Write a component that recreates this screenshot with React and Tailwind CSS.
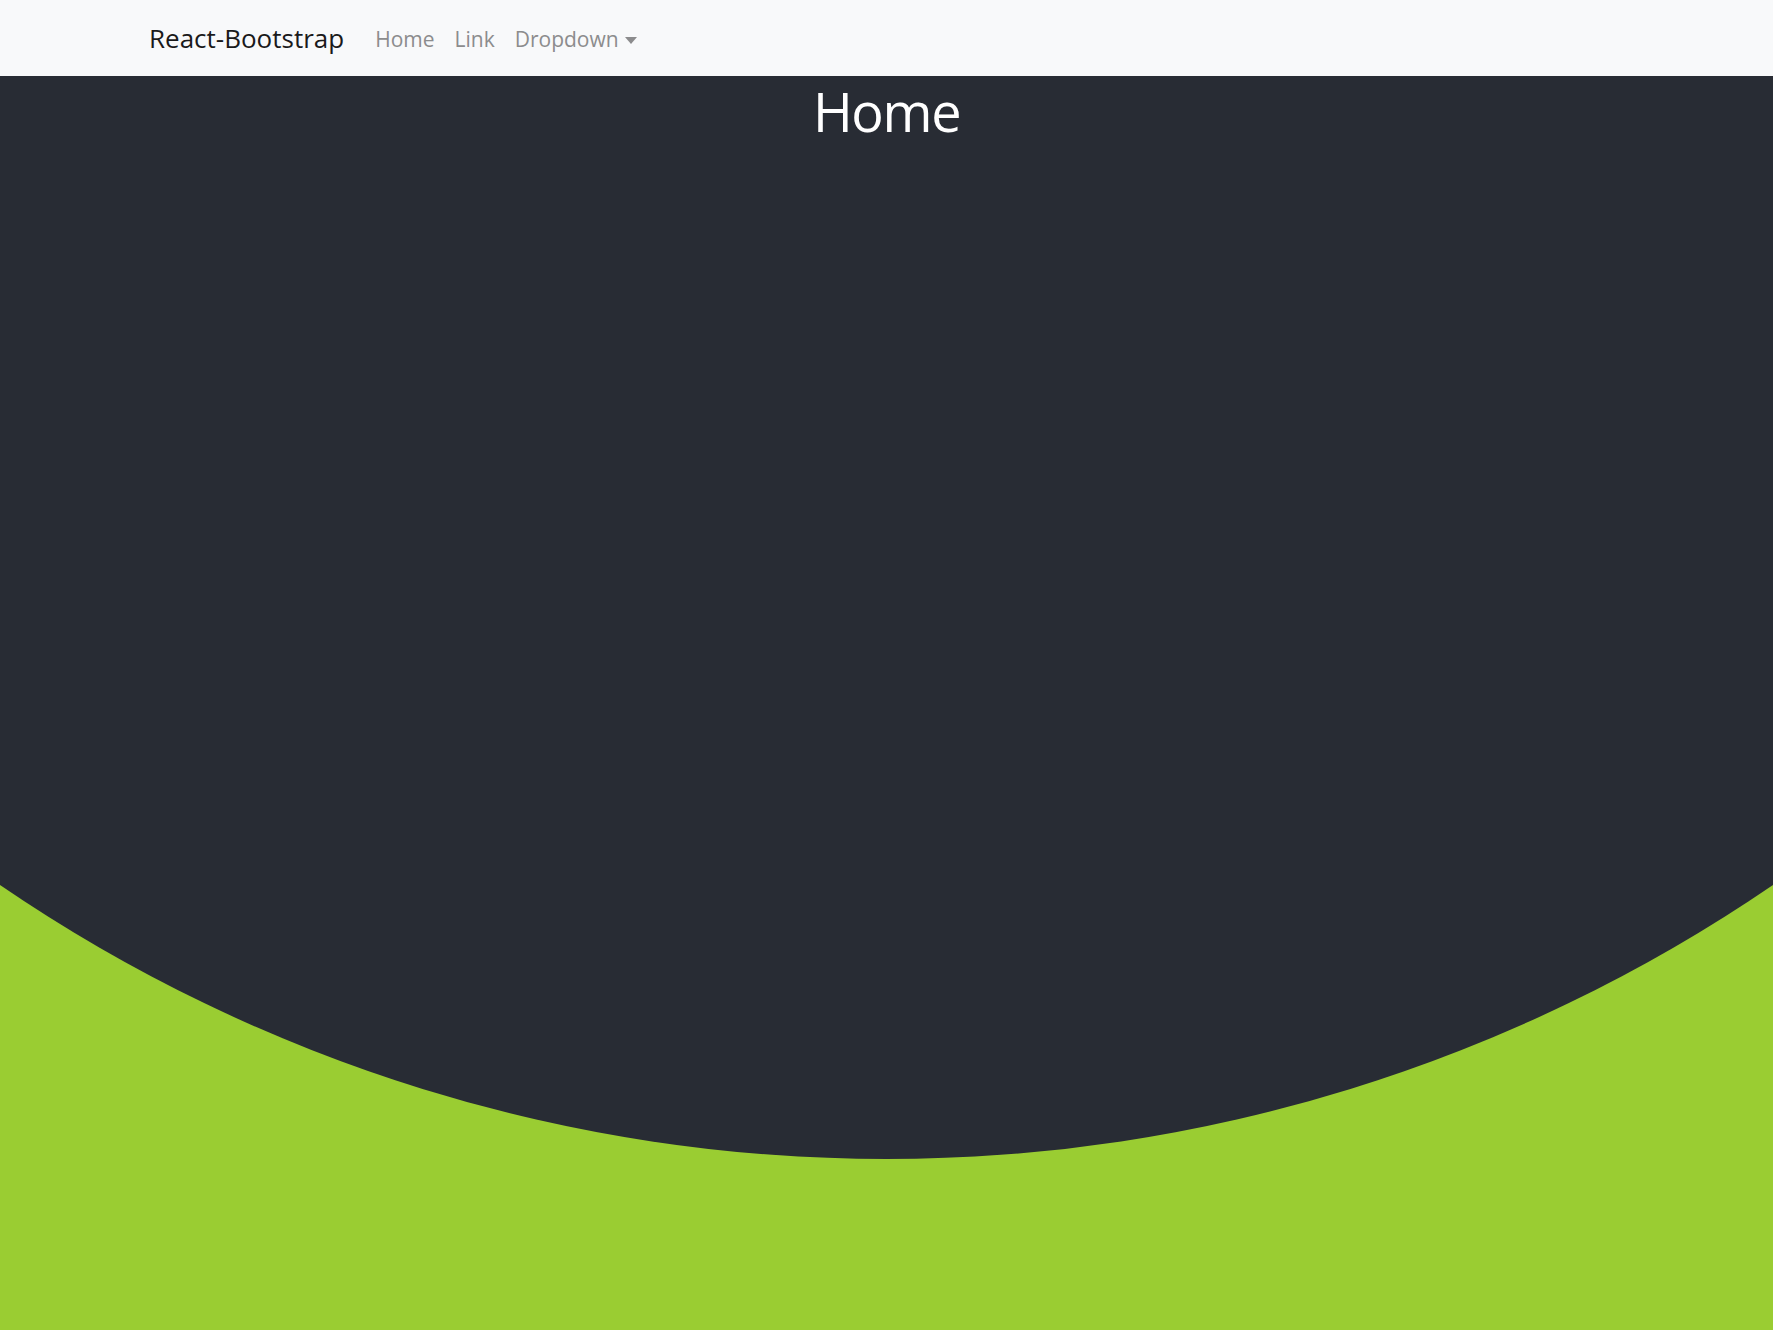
import React from 'react';

const App = () => {
  return (
    <div className="min-h-screen bg-[#9acd32] font-['Open_Sans',sans-serif]">
      {/* ── NAVBAR ── */}
      <nav className="h-[76px] bg-[#f8f9fa] flex items-center pl-[149px]">
        <a href="#" className="text-[26px] leading-[1.5] text-[#1a1a1a] mr-[31px]">React-Bootstrap</a>
        <div className="flex items-center gap-[20px] text-[21px] leading-[1.5] text-[#8c8c8d] mt-[4px]">
          <a href="#">Home</a>
          <a href="#">Link</a>
          <button className="flex items-center gap-[6px]">
            Dropdown
            <span className="w-0 h-0 border-x-[6px] border-x-transparent border-t-[7px] border-t-[#8c8c8d] mt-[1px]"></span>
          </button>
        </div>
      </nav>

      {/* ── HERO ── */}
      <section className="h-[809px] bg-[#282c34] text-center pt-[3px]">
        <h1 className="text-[54px] leading-[1.2] tracking-tight text-white">Home</h1>
      </section>

      {/* curved bottom edge */}
      <svg className="block w-full h-[275px]" viewBox="0 0 1773 275" preserveAspectRatio="none">
        <path d="M0 0 H1773 A1571 1571 0 0 1 0 0 Z" fill="#282c34" />
      </svg>
    </div>
  );
};

export default App;
